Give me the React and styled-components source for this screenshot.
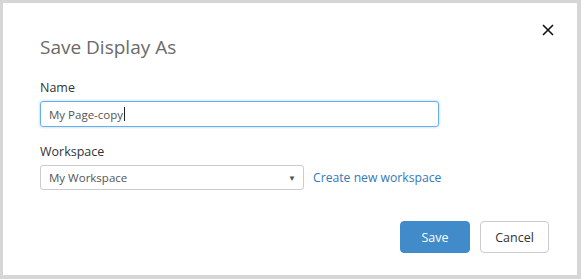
import React from 'react'
import styled, { createGlobalStyle } from 'styled-components'

const GlobalStyle = createGlobalStyle`
  html, body {
    margin: 0;
    padding: 0;
    background: #d6d6d6;
  }
  body {
    font-family: "Open Sans", "Noto Sans", sans-serif;
  }
`

const Page = styled.div`
  width: 581px;
  height: 279px;
  box-sizing: border-box;
  padding: 3px 4px 4px 3px;
  background: #d6d6d6;
`

const Dialog = styled.div`
  position: relative;
  height: 100%;
  box-sizing: border-box;
  background: #fff;
  padding: 30px 37px 0 37px;
  display: flex;
  flex-direction: column;
`

const Title = styled.h2`
  margin: 0;
  font-size: 19px;
  font-weight: 400;
  line-height: 28px;
  color: #6a6a6a;
`

const CloseButton = styled.button`
  position: absolute;
  top: 16px;
  right: 18px;
  width: 22px;
  height: 22px;
  padding: 0;
  border: none;
  background: none;
  display: flex;
  align-items: center;
  justify-content: center;
  cursor: pointer;
`

const Field = styled.div`
  margin-top: ${p => p.$top}px;
  display: flex;
  flex-direction: column;
`

const Label = styled.label`
  font-size: 12.5px;
  line-height: 18px;
  color: #333;
  margin-bottom: 4px;
`

const TextInput = styled.div`
  width: 399px;
  height: 26px;
  box-sizing: border-box;
  border: 1px solid #66afe9;
  border-radius: 3px;
  box-shadow: 0 0 3px rgba(102, 175, 233, 0.6);
  padding: 0 8px;
  display: flex;
  align-items: center;
  font-size: 11.5px;
  color: #555;
`

const Caret = styled.span`
  display: inline-block;
  width: 1px;
  height: 14px;
  background: #222;
  margin-left: 1px;
`

const SelectRow = styled.div`
  display: flex;
  align-items: center;
  gap: 9px;
`

const Select = styled.div`
  width: 264px;
  height: 25px;
  box-sizing: border-box;
  border: 1px solid #ccc;
  border-radius: 3px;
  padding: 0 8px;
  display: flex;
  align-items: center;
  justify-content: space-between;
  font-size: 11.5px;
  color: #555;
`

const Arrow = styled.span`
  font-size: 8px;
  color: #555;
  margin-right: -1px;
`

const Link = styled.a`
  font-size: 12.2px;
  color: #337ab7;
  text-decoration: none;
`

const Footer = styled.div`
  margin-top: 31px;
  display: flex;
  justify-content: flex-end;
  gap: 10px;
  margin-right: -9px;
`

const Button = styled.button`
  width: ${p => p.$width}px;
  height: 32px;
  box-sizing: border-box;
  border-radius: 4px;
  font-family: inherit;
  font-size: 12.5px;
  border: 1px solid ${p => (p.$primary ? '#428bca' : '#ccc')};
  background: ${p => (p.$primary ? '#428bca' : '#fff')};
  color: ${p => (p.$primary ? '#fff' : '#333')};
  cursor: pointer;
`

export default function App() {
  return (
    <Page>
      <GlobalStyle />
      <Dialog>
        <CloseButton aria-label="Close">
          <svg width="12" height="12" viewBox="0 0 12 12">
            <path d="M1 1 L11 11 M11 1 L1 11" stroke="#111" strokeWidth="1.6" />
          </svg>
        </CloseButton>
        <Title>Save Display As</Title>
        <Field $top={18}>
          <Label>Name</Label>
          <TextInput>
            My Page-copy<Caret />
          </TextInput>
        </Field>
        <Field $top={16}>
          <Label>Workspace</Label>
          <SelectRow>
            <Select>
              My Workspace
              <Arrow>▼</Arrow>
            </Select>
            <Link href="#">Create new workspace</Link>
          </SelectRow>
        </Field>
        <Footer>
          <Button $primary $width={70}>Save</Button>
          <Button $width={69}>Cancel</Button>
        </Footer>
      </Dialog>
    </Page>
  )
}
